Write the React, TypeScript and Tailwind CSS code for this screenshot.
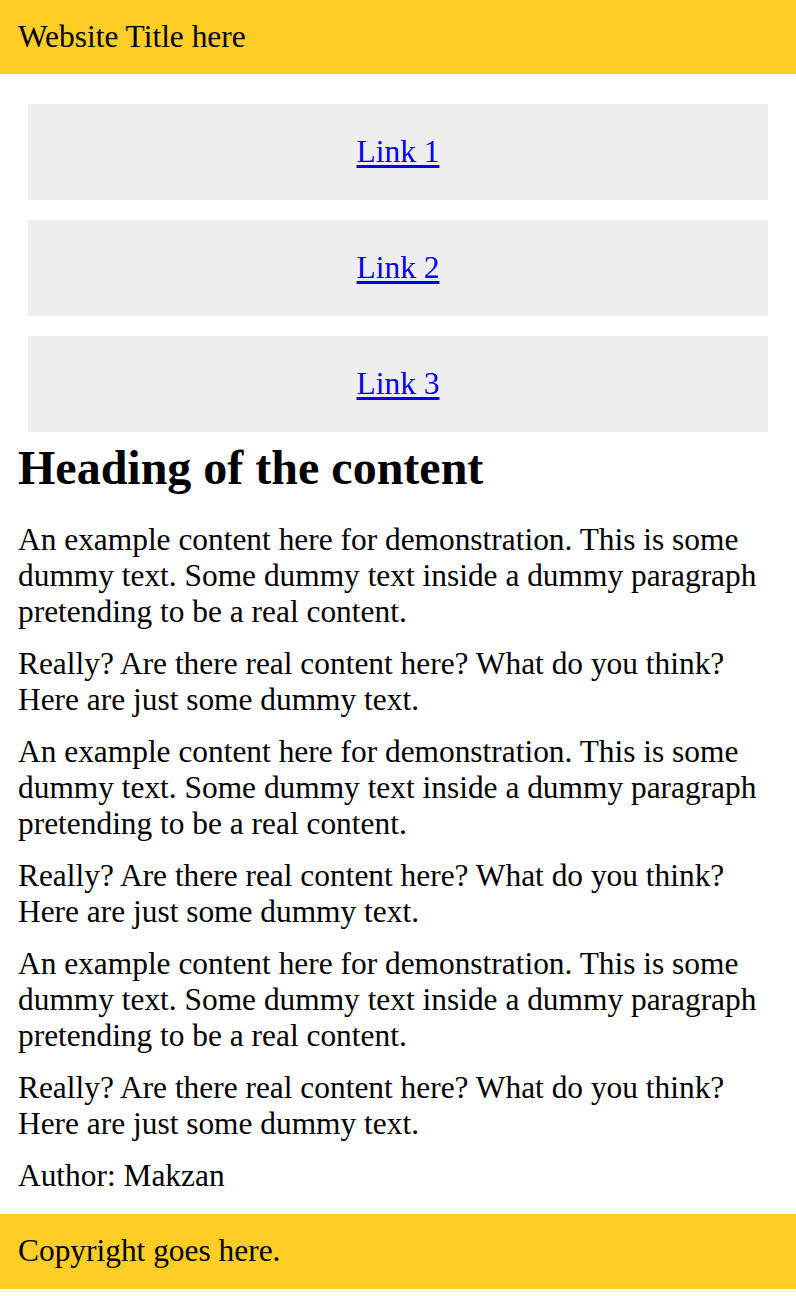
export default function App() {
  const links = ['Link 1', 'Link 2', 'Link 3']
  const paragraphs = [
    'An example content here for demonstration. This is some dummy text. Some dummy text inside a dummy paragraph pretending to be a real content.',
    'Really? Are there real content here? What do you think? Here are just some dummy text.',
    'An example content here for demonstration. This is some dummy text. Some dummy text inside a dummy paragraph pretending to be a real content.',
    'Really? Are there real content here? What do you think? Here are just some dummy text.',
    'An example content here for demonstration. This is some dummy text. Some dummy text inside a dummy paragraph pretending to be a real content.',
    'Really? Are there real content here? What do you think? Here are just some dummy text.',
  ]

  return (
    <div className="w-[796px] min-h-[1296px] bg-white text-black font-['Liberation_Serif','Times_New_Roman',serif] text-[31.4px] leading-[36px]">
      {/* header */}
      <header className="bg-[#fecd26] px-[18px] py-[18px] leading-[37px] h-[74px]">Website Title here</header>

      {/* nav */}
      <nav className="mt-[30px] px-[28px] flex flex-col gap-[20px]">
        {links.map((link) => (
          <div key={link} className="bg-[#eeeeee] h-[96px] flex items-center justify-center">
            <a href="#" className="text-[#0000ee] underline underline-offset-[3px]">
              {link}
            </a>
          </div>
        ))}
      </nav>

      {/* content */}
      <main className="px-[18px]">
        <h1 className="mt-[7px] text-[48px] leading-[58px] font-bold">Heading of the content</h1>
        <div className="mt-[25px] flex flex-col gap-[16px]">
          {paragraphs.map((p, i) => (
            <p key={i}>{p}</p>
          ))}
          <p>Author: Makzan</p>
        </div>
      </main>

      {/* footer */}
      <footer className="mt-[20px] bg-[#fecd26] px-[18px] py-[18px] leading-[37px] h-[75px]">Copyright goes here.</footer>
    </div>
  )
}
